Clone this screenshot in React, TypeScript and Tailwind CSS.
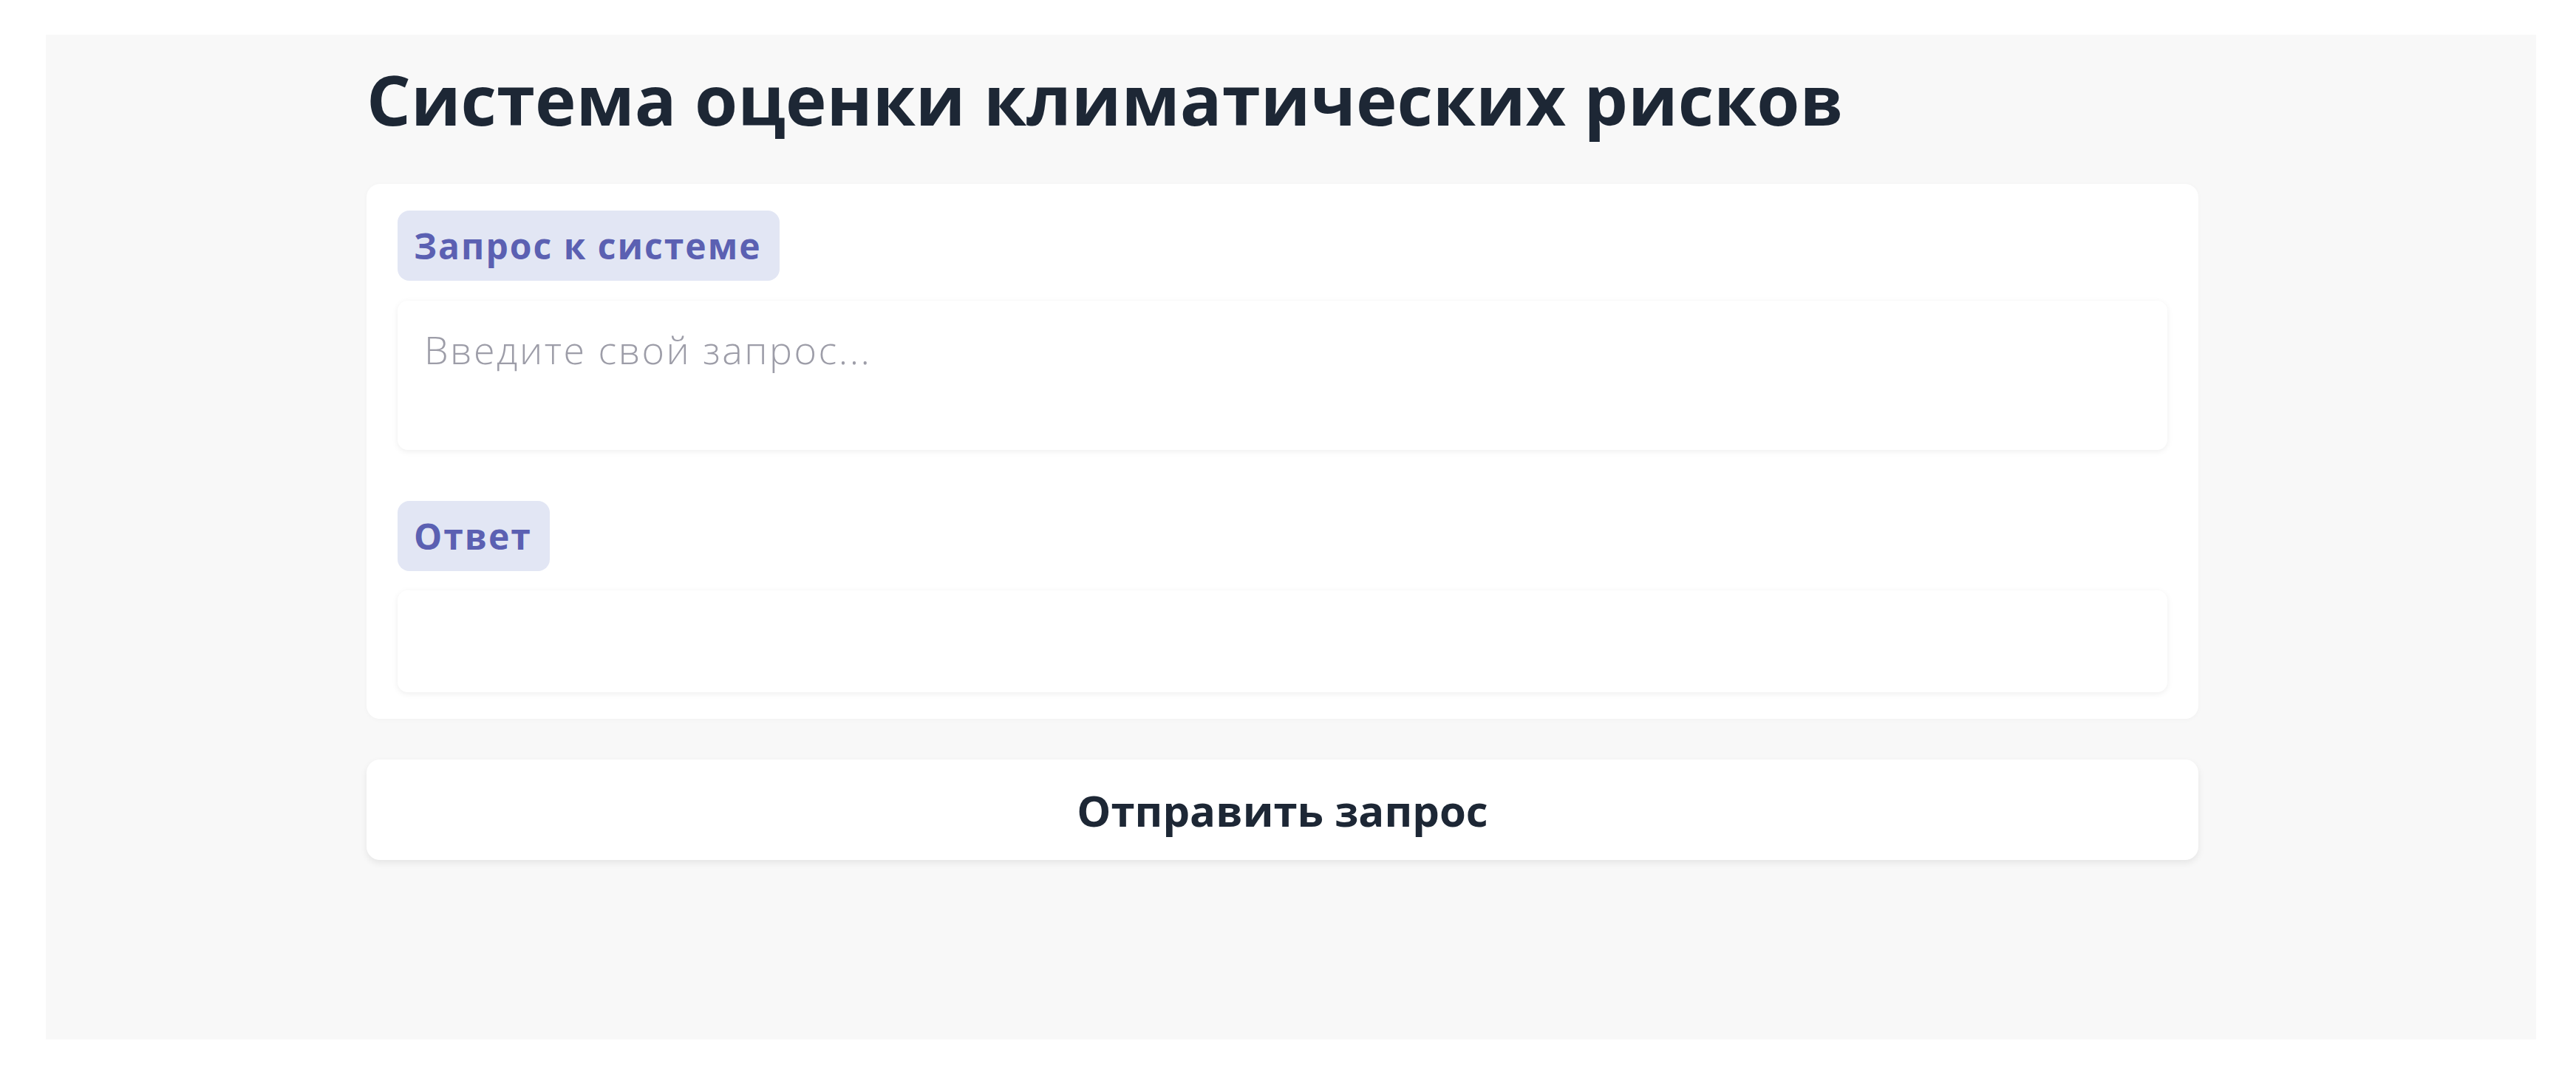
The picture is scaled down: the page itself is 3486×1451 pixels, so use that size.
import { useState } from 'react';

const FONT = { fontFamily: '"Open Sans", "Noto Sans", sans-serif' };

function Label({ children }: { children: string }) {
  return (
    <div className="flex">
      <span className="flex h-[95px] items-center rounded-[16px] bg-[#e2e6f4] pl-[22px] pr-[24px] text-[48px] font-bold tracking-[2px] text-[#5b60b2]">
        {children}
      </span>
    </div>
  );
}

export default function App() {
  const [query, setQuery] = useState('');

  return (
    <div className="min-h-screen bg-white pl-[62px] pr-[54px] pt-[47px]" style={FONT}>
      <div className="h-[1360px] bg-[#f8f8f8] pl-[434px] pt-[30px]">
        <div className="w-[2479px]">
          <h1 className="mb-[57px] text-[94px] font-bold leading-[115px] text-[#1d2735]">
            Система оценки климатических рисков
          </h1>

          <div className="rounded-[18px] bg-white px-[42px] py-[36px] shadow-[0_1px_6px_rgba(0,0,0,0.03)]">
            <Label>Запрос к системе</Label>
            <textarea
              value={query}
              onChange={(e) => setQuery(e.target.value)}
              placeholder="Введите свой запрос..."
              className="mt-[27px] block h-[202px] w-full resize-none rounded-[14px] bg-white px-[36px] pt-[30px] text-[52px] font-light leading-[72px] tracking-[2.5px] text-[#1d2735] shadow-[0_2px_8px_rgba(0,0,0,0.07)] outline-none placeholder:text-[#9d9da8]"
            />

            <div className="mt-[69px]">
              <Label>Ответ</Label>
            </div>
            <div className="mt-[26px] h-[138px] rounded-[14px] bg-white shadow-[0_2px_8px_rgba(0,0,0,0.07)]" />
          </div>

          <button className="mt-[55px] flex h-[136px] w-full items-center justify-center rounded-[18px] bg-white text-[58px] font-bold text-[#1d2735] shadow-[0_4px_10px_rgba(0,0,0,0.08)]">
            Отправить запрос
          </button>
        </div>
      </div>
    </div>
  );
}
